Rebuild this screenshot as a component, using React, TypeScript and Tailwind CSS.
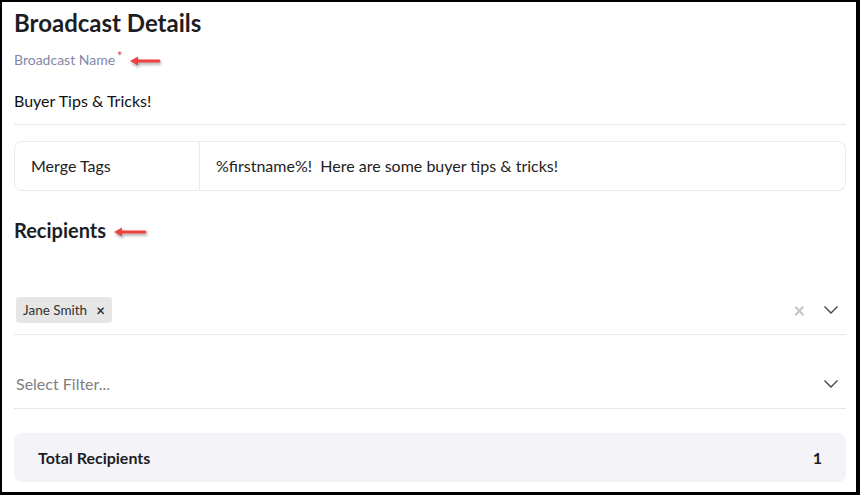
import React from "react";

function RedArrow({ width = 32 }: { width?: number }) {
  return (
    <svg
      width={width}
      height={12}
      viewBox={`0 0 ${width} 12`}
      style={{ filter: "drop-shadow(1px 2px 1.5px rgba(0,0,0,0.35))" }}
    >
      <line x1={6} y1={6} x2={width - 2} y2={6} stroke="#f0413f" strokeWidth={3} strokeLinecap="round" />
      <polygon points={`1,6 9,1.5 9,10.5`} fill="#f0413f" />
    </svg>
  );
}

function Chevron() {
  return (
    <svg width={16} height={10} viewBox="0 0 16 10" fill="none">
      <path d="M1.5 1.5 L8 8 L14.5 1.5" stroke="#444" strokeWidth={1.4} />
    </svg>
  );
}

export default function App() {
  return (
    <div
      className="w-[860px] h-[495px] box-border border-l-2 border-t-2 border-r-4 border-b-[3px] border-black bg-white overflow-hidden"
      style={{ fontFamily: "Lato, 'Noto Sans', sans-serif" }}
    >
      <div className="pl-3 pr-[10px] flex flex-col">
        <h1 className="text-[24px] leading-[30px] font-bold text-[#1d1d24] mt-[6px]">Broadcast Details</h1>

        <div className="flex items-center mt-[13px] h-[16px]">
          <span className="text-[14px] text-[#8487a8]">Broadcast Name</span>
          <span className="text-[13px] text-[#e0454a] ml-[2px] -mt-[5px]">*</span>
          <span className="ml-[6px] mt-[4px]">
            <RedArrow width={32} />
          </span>
        </div>

        <div className="text-[16px] text-[#111] mt-[24px] leading-[20px]">Buyer Tips &amp; Tricks!</div>
        <div className="h-px bg-[#e8e8ec] mt-[13px]" />

        <div className="flex mt-4 h-[50px]">
          <div className="w-[186px] border border-[#ececf0] rounded-l-lg flex items-center pl-4 text-[16px] text-[#222]">
            Merge Tags
          </div>
          <div className="flex-1 border border-l-0 border-[#ececf0] rounded-r-lg flex items-center pl-4 text-[16px] text-[#222]">
            %firstname%!&nbsp; Here are some buyer tips &amp; tricks!
          </div>
        </div>

        <div className="flex items-center mt-[26px] h-[26px]">
          <span className="text-[20px] font-bold text-[#1d1d24]">Recipients</span>
          <span className="ml-[7px] mt-[4px]">
            <RedArrow width={34} />
          </span>
        </div>

        <div className="flex items-center justify-between mt-[53px] h-[28px] pl-[2px]">
          <div className="flex items-center bg-[#e6e6e6] rounded-[3px] h-[26px] pl-[7px] pr-[7px] text-[13.5px] text-[#333]">
            Jane Smith
            <span className="ml-[9px] text-[15px] font-bold text-[#333]">×</span>
          </div>
          <div className="flex items-center gap-[18px] pr-[7px]">
            <span className="text-[#c4c4c4] text-[20px] font-bold leading-none">×</span>
            <Chevron />
          </div>
        </div>
        <div className="h-px bg-[#e8e8ec] mt-[10px]" />

        <div className="flex items-center justify-between mt-[37px] h-[24px] pl-[2px]">
          <span className="text-[16px] text-[#808080]">Select Filter...</span>
          <span className="pr-[7px]">
            <Chevron />
          </span>
        </div>
        <div className="h-px bg-[#e8e8ec] mt-[12px]" />

        <div className="mt-[24px] h-[49px] bg-[#f4f4f8] rounded-lg flex items-center justify-between pl-6 pr-6">
          <span className="text-[16px] font-bold text-[#1d1d24]">Total Recipients</span>
          <span className="text-[16px] font-bold text-[#1d1d24]">1</span>
        </div>
      </div>
    </div>
  );
}
